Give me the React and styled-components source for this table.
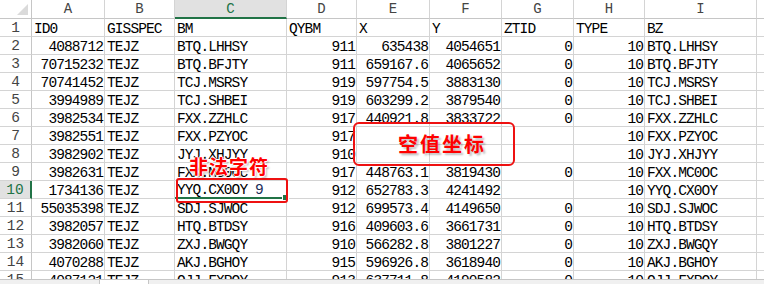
import React from 'react'
import styled, {createGlobalStyle, css} from 'styled-components'

const GlobalStyle = createGlobalStyle`
	html, body {
		margin: 0;
		padding: 0;
		background: #fff;
		overflow: hidden;
	}
`

const GREEN = '#217346'
const GRID = '#d4d4d4'

const Page = styled.div`
	width: 764px;
	height: 284px;
	display: flex;
	flex-direction: column;
	overflow: hidden;
`
const Sheet = styled.div`
	position: relative;
	flex: none;
	height: 279px;
	overflow: hidden;
`
const Grid = styled.div`
	display: grid;
	grid-template-columns: 32px 73px 70px 112px 70px 73px 72px 72px 71px 112px 60px;
	grid-template-rows: 19px;
	grid-auto-rows: 18px;
`
const Corner = styled.div`
	box-sizing: border-box;
	border-right: 1px solid #c6c6c6;
	border-bottom: 1px solid #c6c6c6;
	display: flex;
	align-items: flex-end;
	justify-content: flex-end;
	padding: 0 3px 3px 0;
`
const ColHead = styled.div`
	box-sizing: border-box;
	border-right: 1px solid ${GRID};
	border-bottom: 1px solid #c6c6c6;
	display: flex;
	align-items: center;
	justify-content: center;
	font-family: "Liberation Mono", monospace;
	font-size: 14px;
	color: #444;
	${p => p.$active && css`
		background: #e1e1e1;
		color: ${GREEN};
		border-bottom: 2px solid ${GREEN};
	`}
`
const RowHead = styled.div`
	box-sizing: border-box;
	border-right: 1px solid #c6c6c6;
	border-bottom: 1px solid ${GRID};
	display: flex;
	align-items: center;
	justify-content: center;
	padding-top: 1px;
	font-family: "Liberation Mono", monospace;
	font-size: 14.5px;
	color: #444;
	${p => p.$active && css`
		background: #e1e1e1;
		color: ${GREEN};
		border-right: 2px solid ${GREEN};
	`}
`
const Cell = styled.div`
	box-sizing: border-box;
	border-right: 1px solid ${GRID};
	border-bottom: 1px solid ${GRID};
	display: flex;
	align-items: center;
	justify-content: ${p => p.$num ? 'flex-end' : 'flex-start'};
	padding: 2px 1px 0 2px;
	font-family: "Liberation Mono", monospace;
	font-size: 14.5px;
	letter-spacing: -0.9px;
	color: #000;
	white-space: pre;
	overflow: visible;
	${p => p.$selected && css`
		border-bottom: 2px solid ${GREEN};
		position: relative;
	`}
`
const Extra = styled.span`
	color: #1b2d5a;
`
const FillHandle = styled.span`
	position: absolute;
	right: -3px;
	bottom: -4px;
	width: 5px;
	height: 5px;
	background: ${GREEN};
	border: 1px solid #fff;
`
const RedBox = styled.div`
	position: absolute;
	left: ${p => p.$x}px;
	top: ${p => p.$y}px;
	width: ${p => p.$w}px;
	height: ${p => p.$h}px;
	box-sizing: border-box;
	border: 2px solid #ee1111;
	border-radius: ${p => p.$r}px;
	display: flex;
	align-items: center;
	justify-content: center;
`
const Note = styled.div`
	position: absolute;
	left: ${p => p.$x}px;
	top: ${p => p.$y}px;
	font-family: "Noto Sans CJK SC", sans-serif;
	font-weight: 700;
	font-size: ${p => p.$size}px;
	line-height: 1;
	color: #ff0000;
	letter-spacing: 1px;
	text-shadow: -1px 0 #fff, 1px 0 #fff, 0 -1px #fff, 0 1px #fff, 2px 2px 2px rgba(0,0,0,0.25);
`
const BoxText = styled.span`
	font-family: "Noto Sans CJK SC", sans-serif;
	font-weight: 700;
	font-size: 20px;
	line-height: 1;
	color: #ff0000;
	letter-spacing: 2px;
	margin-left: 16px;
	text-shadow: 2px 2px 2px rgba(0,0,0,0.25);
`
const Bottom = styled.div`
	flex: 1;
	display: grid;
	grid-template-columns: 100px 48px 1fr;
	border-top: 1px solid #c6c6c6;
	background: #fff;
`
const BottomPane = styled.div`
	background: #f0f0f0;
	border-left: ${p => p.$edge ? '1px solid #c6c6c6' : 'none'};
	border-right: ${p => p.$edge ? 'none' : '1px solid #c6c6c6'};
`

const LETTERS = ['A', 'B', 'C', 'D', 'E', 'F', 'G', 'H', 'I', '']
const NUM = [true, false, false, true, true, true, true, true, false, false]

const ROWS = [
	['ID0', 'GISSPEC', 'BM', 'QYBM', 'X', 'Y', 'ZTID', 'TYPE', 'BZ'],
	['4088712', 'TEJZ', 'BTQ.LHHSY', '911', '635438', '4054651', '0', '10', 'BTQ.LHHSY'],
	['70715232', 'TEJZ', 'BTQ.BFJTY', '911', '659167.6', '4065652', '0', '10', 'BTQ.BFJTY'],
	['70741452', 'TEJZ', 'TCJ.MSRSY', '919', '597754.5', '3883130', '0', '10', 'TCJ.MSRSY'],
	['3994989', 'TEJZ', 'TCJ.SHBEI', '919', '603299.2', '3879540', '0', '10', 'TCJ.SHBEI'],
	['3982534', 'TEJZ', 'FXX.ZZHLC', '917', '440921.8', '3833722', '0', '10', 'FXX.ZZHLC'],
	['3982551', 'TEJZ', 'FXX.PZYOC', '917', '', '', '', '10', 'FXX.PZYOC'],
	['3982902', 'TEJZ', 'JYJ.XHJYY', '910', '', '', '', '10', 'JYJ.XHJYY'],
	['3982631', 'TEJZ', 'FXX.MC0OC', '917', '448763.1', '3819430', '0', '10', 'FXX.MC0OC'],
	['1734136', 'TEJZ', 'YYQ.CX0OY', '912', '652783.3', '4241492', '', '10', 'YYQ.CX0OY'],
	['55035398', 'TEJZ', 'SDJ.SJWOC', '912', '699573.4', '4149650', '0', '10', 'SDJ.SJWOC'],
	['3982057', 'TEJZ', 'HTQ.BTDSY', '916', '409603.6', '3661731', '0', '10', 'HTQ.BTDSY'],
	['3982060', 'TEJZ', 'ZXJ.BWGQY', '910', '566282.8', '3801227', '0', '10', 'ZXJ.BWGQY'],
	['4070288', 'TEJZ', 'AKJ.BGHOY', '915', '596926.8', '3618940', '0', '10', 'AKJ.BGHOY'],
	['4087121', 'TEJZ', 'QJJ.FXPOY', '913', '637711.8', '4190582', '0', '10', 'QJJ.FXPOY'],
]

export default function App() {
	return <Page>
		<GlobalStyle/>
		<Sheet>
			<Grid>
				<Corner>
					<svg width="11" height="11" viewBox="0 0 11 11">
						<polygon points="11,0 11,11 0,11" fill="#dadada"/>
					</svg>
				</Corner>
				{LETTERS.map((l, i) =>
					<ColHead key={i} $active={l === 'C'}>{l}</ColHead>
				)}
				{ROWS.map((row, r) => {
					const rowNo = r + 1
					return <React.Fragment key={r}>
						<RowHead $active={rowNo === 10}>{rowNo}</RowHead>
						{LETTERS.map((l, c) => {
							const v = row[c] || ''
							if (rowNo === 10 && c === 2) {
								return <Cell key={c} $selected>
									{v} <Extra>9</Extra>
									<FillHandle/>
								</Cell>
							}
							return <Cell key={c} $num={rowNo > 1 && NUM[c]}>{v}</Cell>
						})}
					</React.Fragment>
				})}
			</Grid>
			<RedBox $x={176} $y={178} $w={112} $h={25} $r={3}/>
			<RedBox $x={353} $y={122} $w={162} $h={44} $r={6}>
				<BoxText>空值坐标</BoxText>
			</RedBox>
			<Note $x={189} $y={156} $size={19}>非法字符</Note>
		</Sheet>
		<Bottom>
			<BottomPane/>
			<div/>
			<BottomPane $edge/>
		</Bottom>
	</Page>
}
